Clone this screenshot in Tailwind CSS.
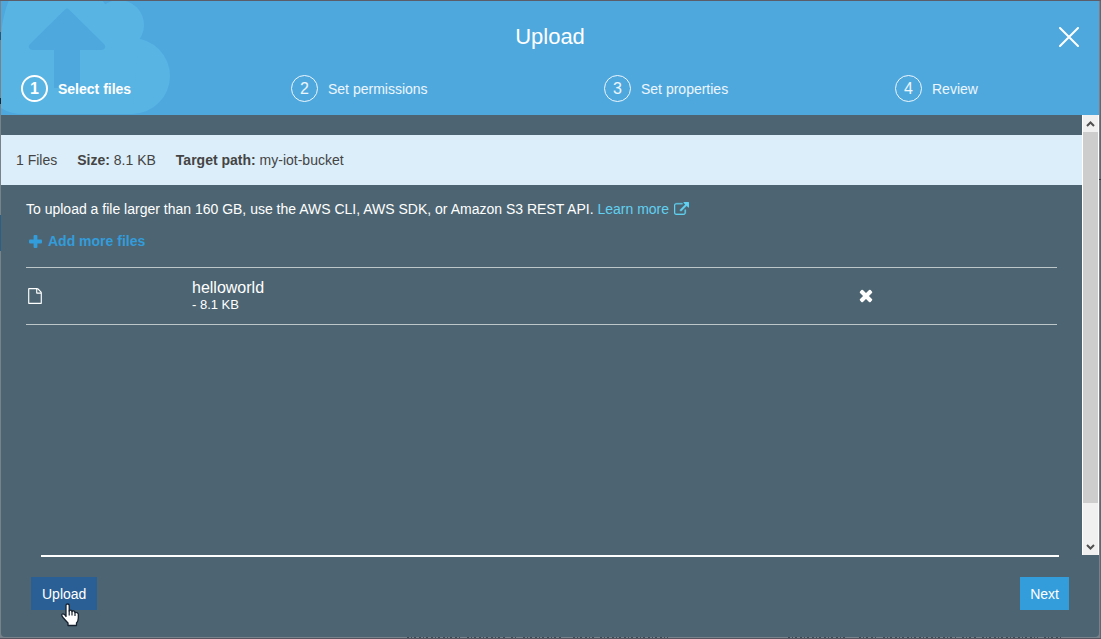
<!DOCTYPE html>
<html lang="en">
<head>
<meta charset="utf-8">
<title>Upload</title>
<script src="https://cdn.jsdelivr.net/npm/@tailwindcss/browser@4"></script>
</head>
<body class="relative h-screen overflow-hidden border-t border-[#5b5e68] bg-[#78828b] pr-0.5 pb-0.5 pl-px font-['Liberation_Sans',Arial,sans-serif] text-sm leading-5 text-white">
  <!-- dimmed page behind the dialog -->
  <svg class="absolute inset-0 h-full w-full" aria-hidden="true">
    <path d="M0.5 31v8" stroke="#35536b"/>
    <path d="M0.5 97v6" stroke="#22252c"/>
    <path d="M0.5 214v36" stroke="#2d5f85"/>
    <path d="M1100.500 0v638" stroke="#5d6871"/>
    <path d="M1099 178.500h2" stroke="#333a41"/>
  </svg>
  <div class="absolute inset-x-0 bottom-0 h-px bg-[#56545e]" aria-hidden="true"></div>
  <svg class="absolute inset-x-0 bottom-px h-px w-full" aria-hidden="true">
    <path d="M407 .5h54M467 .5h38M511 .5h6M523 .5h40M573 .5h22M600 .5h68M788 .5h60M859 .5h18M883 .5h73M962 .5h15M982 .5h56M1044 .5h19" stroke="#3c4753" stroke-dasharray="2 2 1 2 2 3"/>
  </svg>

  <main role="dialog" aria-labelledby="title" class="relative flex h-full flex-col overflow-hidden rounded-b bg-[#4d6572]">
    <header class="relative overflow-hidden bg-[#4ea8de] pb-[13px]">
      <svg class="absolute top-0 left-0" width="170" height="114" aria-hidden="true">
        <g fill="#58b4e3">
          <circle cx="118" cy="24" r="25"/>
          <circle cx="131" cy="75" r="38"/>
          <path d="M8-1H101L104 3L120 10L138 37L131 113H23Q9 113 0 107V33Q2 14 8-1Z"/>
        </g>
        <path d="M64 8.500Q66 6.500 68 8.500L103 43Q105 45 104 47Q103 49 100 49H79V87H53V49H32Q29 49 28 47Q27 45 29 43Z" fill="#4ea8de"/>
      </svg>
      <div class="relative grid h-[71px] grid-cols-[1fr_auto_1fr] items-center px-5">
        <h1 id="title" class="col-start-2 text-[22px] leading-7">Upload</h1>
        <button type="button" aria-label="Close" class="justify-self-end">
          <svg class="block" width="20" height="20" viewBox="0 0 20 20" fill="none" stroke="#fff" stroke-width="2" stroke-linecap="round"><path d="M1 1L19 19M19 1L1 19"/></svg>
        </button>
      </div>
      <ol class="relative mt-[3px] grid grid-cols-[270fr_313fr_291fr_204fr] pl-5">
        <li class="flex items-center gap-2.5 font-bold"><span class="flex size-[27px] items-center justify-center rounded-full border-2 text-base">1</span>Select files</li>
        <li class="flex items-center gap-2.5 text-white/90"><span class="flex size-[27px] items-center justify-center rounded-full border text-base">2</span>Set permissions</li>
        <li class="flex items-center gap-2.5 text-white/90"><span class="flex size-[27px] items-center justify-center rounded-full border text-base">3</span>Set properties</li>
        <li class="flex items-center gap-2.5 text-white/90"><span class="flex size-[27px] items-center justify-center rounded-full border text-base">4</span>Review</li>
      </ol>
    </header>

    <div class="flex min-h-0 flex-1">
      <section class="min-w-0 flex-1 pt-5">
        <div class="flex h-[50px] items-center gap-5 bg-[#dceef9] px-[15px] text-[#444]">
          <span>1 Files</span>
          <span><b>Size:</b> 8.1 KB</span>
          <span><b>Target path:</b> my-iot-bucket</span>
        </div>
        <div class="px-[25px] pt-3.5">
          <p>To upload a file larger than 160 GB, use the AWS CLI, AWS SDK, or Amazon S3 REST API.
            <a href="#" class="text-[#62d0f0]">Learn more
              <svg class="ml-px inline-block align-[-1px]" width="15" height="13" viewBox="0 0 1792 1536" fill="currentColor" stroke="currentColor" stroke-width="40" aria-hidden="true"><path d="M1408 928v320q0 119-84.500 203.500t-203.500 84.500h-832q-119 0-203.500-84.500t-84.500-203.500v-832q0-119 84.500-203.500t203.500-84.500h704q14 0 23 9t9 23v64q0 14-9 23t-23 9h-704q-66 0-113 47t-47 113v832q0 66 47 113t113 47h832q66 0 113-47t47-113v-320q0-14 9-23t23-9h64q14 0 23 9t9 23zm384-864v512q0 26-19 45t-45 19-45-19l-176-176-652 652q-10 10-23 10t-23-10l-114-114q-10-10-10-23t10-23l652-652-176-176q-19-19-19-45t19-45 45-19h512q26 0 45 19t19 45z"/></svg></a>
          </p>
          <button type="button" class="mt-3 flex items-center gap-1.5 pl-[3px] font-bold text-[#339cdb]">
            <svg width="13" height="13" viewBox="0 0 13 13" fill="currentColor" aria-hidden="true"><rect x="4.600" y="0" width="3.800" height="13" rx="1"/><rect x="0" y="4.600" width="13" height="3.800" rx="1"/></svg>
            Add more files
          </button>
          <ul class="mt-4 border-y border-[#bdc6c8]">
            <li class="grid h-14 grid-cols-[166fr_667fr_198fr] items-center">
              <svg class="ml-0.5" width="14" height="16" viewBox="0 0 1536 1792" fill="#fff" aria-hidden="true"><path d="M1468 380q28 28 48 76t20 88v1152q0 40-28 68t-68 28h-1344q-40 0-68-28t-28-68v-1600q0-40 28-68t68-28h896q40 0 88 20t76 48zm-444-244v376h376q-10-29-22-41l-313-313q-12-12-41-22zm384 1528v-1024h-416q-40 0-68-28t-28-68v-416h-768v1536h1280z"/></svg>
              <div>
                <p class="text-base leading-[18px]">helloworld</p>
                <p class="text-[13px] leading-4">- 8.1 KB</p>
              </div>
              <button type="button" aria-label="Remove helloworld" class="justify-self-start">
                <svg class="block" width="14" height="14" viewBox="0 0 15 15" fill="#fff"><g transform="rotate(45 7.500 7.500)"><rect x="5.300" y="-.5" width="4.400" height="16" rx="1.200"/><rect x="-.5" y="5.300" width="16" height="4.400" rx="1.200"/></g></svg>
              </button>
            </li>
          </ul>
        </div>
      </section>
      <div class="flex w-[17px] flex-col border-x border-white bg-[#f0f0f0]" aria-hidden="true">
        <svg class="h-[17px] w-full" viewBox="0 0 15 17" fill="none" stroke="#505050" stroke-width="2"><path d="M4 11L7.500 7.500L11 11"/></svg>
        <div class="flex-[371] bg-[#cdcdcd]"></div>
        <div class="flex-[35]"></div>
        <svg class="h-[17px] w-full" viewBox="0 0 15 17" fill="none" stroke="#505050" stroke-width="2"><path d="M4 7L7.500 10.500L11 7"/></svg>
      </div>
    </div>

    <footer class="px-[30px] pb-[27px]">
      <div class="mx-2.5 border-t-2 border-white"></div>
      <div class="flex justify-between pt-5">
        <button type="button" class="relative h-[33px] bg-[#2a5f96] px-[11px]">Upload
          <svg class="absolute top-[26px] left-[30px]" width="19" height="24" viewBox="0 0 19 24" aria-hidden="true"><path d="M5 2.500Q5 1 6.600 1T8.200 2.500V8Q9 6.600 11 7.500V8.500Q12.800 7.200 14 9V9.500Q16.500 9 17.300 11V15Q17.300 18 15.500 20V22.500H7V20Q4.500 17.500 2 14.500Q-.2 11.500 1.500 11T5 13.500Z" fill="#fff" stroke="#16202e" stroke-width="1.300" stroke-linejoin="round"/><path d="M8.200 7.500V12.500M11 8V12.500M14 9V13" stroke="#16202e" stroke-width="1.200"/></svg>
        </button>
        <button type="button" class="h-[33px] bg-[#339cdb] px-2.5">Next</button>
      </div>
    </footer>
  </main>
</body>
</html>
